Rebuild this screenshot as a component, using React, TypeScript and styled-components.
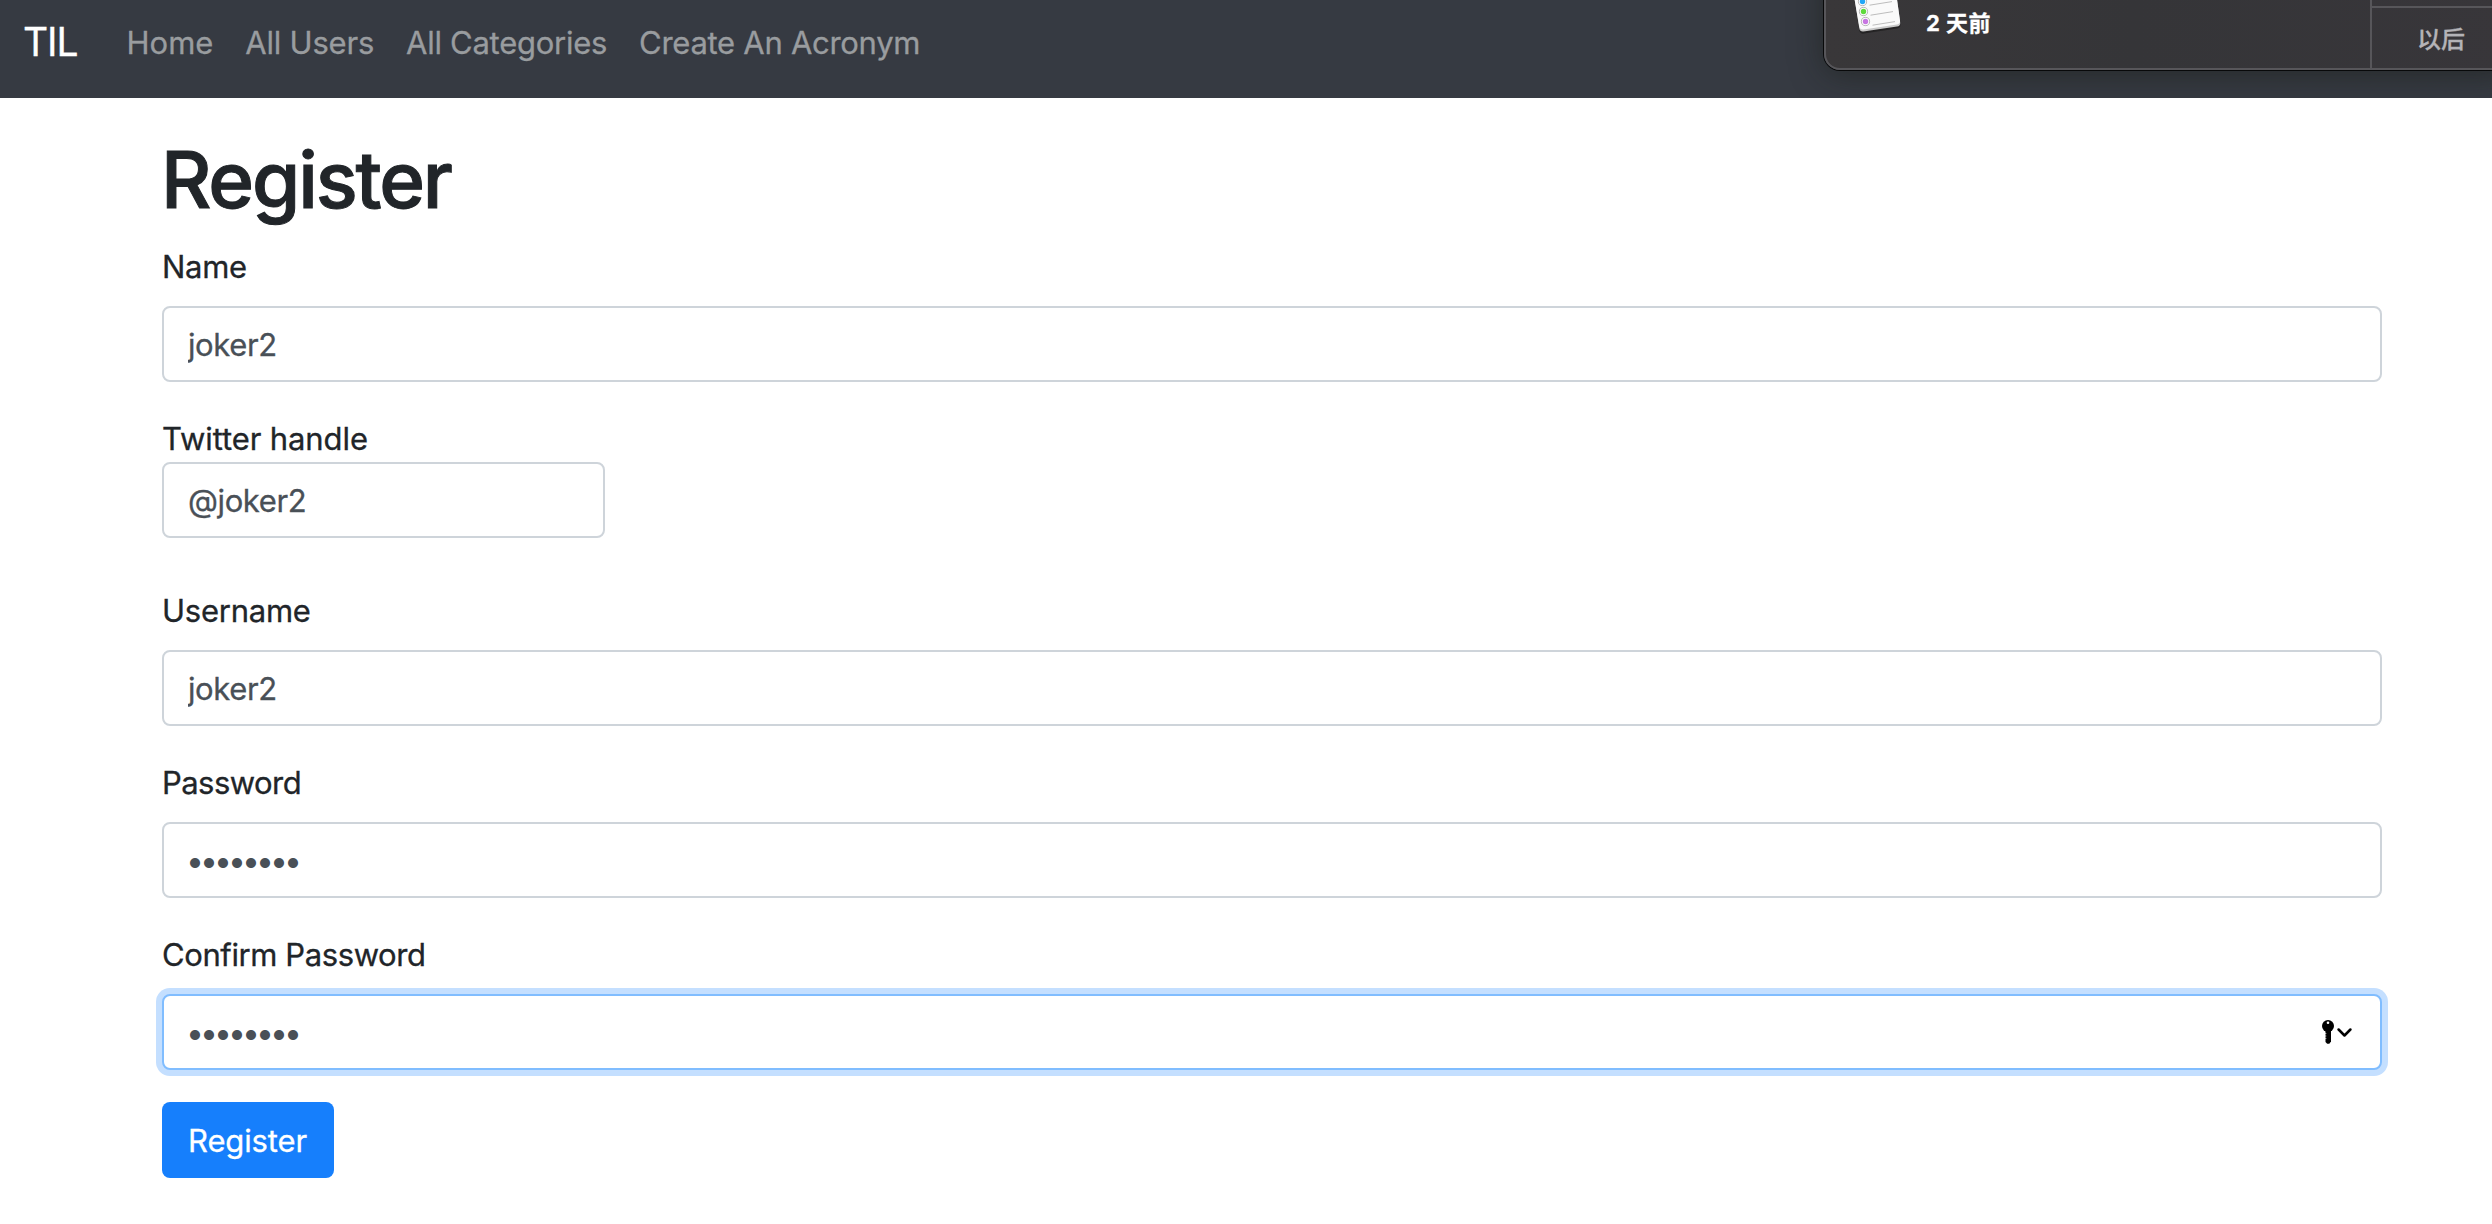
import React from 'react';
import styled, { createGlobalStyle, css } from 'styled-components';

const GlobalStyle = createGlobalStyle`
  * { box-sizing: border-box; }
  body {
    margin: 0;
    background: #fff;
    color: #212529;
    font-family: Inter, "Liberation Sans", "Noto Sans CJK SC", sans-serif;
    font-size: 31px;
    -webkit-text-stroke: 0.3px currentColor;
  }
`;

const Navbar = styled.nav`
  position: relative;
  display: flex;
  align-items: flex-start;
  height: 98px;
  padding: 12px 23px 0;
  overflow: hidden;
  background: #363a42;
`;

const Brand = styled.a`
  margin-right: 49px;
  color: #fff;
  font-size: 39px;
  line-height: 60px;
  letter-spacing: -1.07px;
`;

const NavLinks = styled.div`
  display: flex;
  gap: 32px;
  padding-top: 6px;
`;

const NavLink = styled.a<{ $tracking?: number }>`
  color: #999c9f;
  line-height: 50px;
  letter-spacing: ${(p) => p.$tracking ?? 0}px;
  white-space: nowrap;
`;

const Notification = styled.aside`
  position: absolute;
  top: -40px;
  right: -20px;
  display: flex;
  width: 688px;
  height: 110px;
  border: 2px solid #57565a;
  border-radius: 16px;
  background: linear-gradient(90deg, #393739, #353538 45%, #38363a);
  box-shadow: 0 0 0 1px #08090a, 0 4px 32px rgba(20, 24, 16, 0.5);
`;

const NotificationBody = styled.div`
  display: flex;
  flex: 1;
  padding: 38px 0 0 25px;
`;

const NotificationTime = styled.span`
  margin: 7px 0 0 23px;
  color: #fff;
  font-family: Inter, "Noto Sans CJK SC", sans-serif;
  font-size: 22px;
  font-weight: 700;
  line-height: 32px;
  letter-spacing: 0.5px;
`;

const NotificationActions = styled.div`
  display: flex;
  flex-direction: column;
  width: 140px;
  border-left: 2px solid #57565a;
`;

const NotificationAction = styled.div`
  height: 62px;
  margin-top: auto;
  padding: 12px 0 0 45px;
  border-top: 2px solid #57565a;
  color: #b4b3b7;
  font-family: "Noto Sans CJK SC", sans-serif;
  font-size: 24px;
  font-weight: 500;
  line-height: 36px;
`;

const Content = styled.main`
  padding: 32px 110px 0 162px;
`;

const Title = styled.h1`
  height: 96px;
  margin: 0 0 16px -1px;
  font-size: 78px;
  font-weight: 500;
  line-height: 99px;
  letter-spacing: -2.15px;
  -webkit-text-stroke-width: 1px;
`;

const Form = styled.form`
  display: flex;
  flex-direction: column;
  align-items: flex-start;
  gap: 32px;
`;

const Group = styled.div<{ $inline?: boolean }>`
  display: flex;
  flex-direction: column;
  width: ${(p) => (p.$inline ? '443px' : '100%')};
  gap: ${(p) => (p.$inline ? 0 : 16)}px;
  padding-bottom: ${(p) => (p.$inline ? 16 : 0)}px;
`;

const Label = styled.label<{ $tracking: number }>`
  height: 48px;
  line-height: 50px;
  letter-spacing: ${(p) => p.$tracking}px;
`;

const Control = styled.div<{ $active?: boolean }>`
  display: flex;
  align-items: center;
  height: 76px;
  padding-right: 28px;
  border: 2px solid #ced4da;
  border-radius: 8px;
  background: #fff;
  ${(p) =>
    p.$active &&
    css`
      border-color: #80bdff;
      box-shadow: 0 0 0 6px #c4dfff;
    `}
`;

const Input = styled.input`
  flex: 1;
  min-width: 0;
  height: 72px;
  padding: 0 0 0 24px;
  border: 0;
  outline: 0;
  background: transparent;
  color: #495057;
  font: inherit;
  letter-spacing: -0.4px;

  &[type='password'] {
    padding-left: 22px;
    font-size: 32px;
    letter-spacing: -4px;
    -webkit-text-stroke-width: 0;
  }
`;

const Submit = styled.button`
  width: 172px;
  height: 76px;
  padding: 0 1px 0 0;
  border: 0;
  border-radius: 8px;
  background: #167ffc;
  color: #fff;
  font: inherit;
  letter-spacing: -0.15px;
`;

const RemindersIcon = () => (
  <svg width="52" height="40" viewBox="1851 0 52 40">
    <path
      d="M1854 -4 L1859.3 29 Q1860 33 1864 32.4 L1897 27.4 Q1901 26.6 1900.4 22.6 L1896.500 -4 Z"
      fill="#141414"
      opacity="0.55"
      transform="translate(0 1.2)"
    />
    <path
      d="M1854 -4 L1859.3 28.500 Q1860 32 1863.500 31.500 L1897 26.500 Q1900.700 25.800 1900.200 22.400 L1896.500 -4 Z"
      fill="#c9c9c9"
    />
    <path
      d="M1854 -4 L1859.3 26.500 Q1860 30 1863.500 29.500 L1897 24.500 Q1900.500 23.800 1900 20.500 L1896.500 -4 Z"
      fill="#fafafa"
    />
    {[
      { x: 1862.5, y: 1.5, color: '#22a7f7' },
      { x: 1863.5, y: 11.5, color: '#5fda3c' },
      { x: 1865.5, y: 21.5, color: '#c877e2' },
    ].map(({ x, y, color }) => (
      <g key={color}>
        <circle cx={x} cy={y} r="4.1" fill="#fff" stroke="#a5a5a5" strokeWidth="0.8" />
        <circle cx={x} cy={y} r="2.7" fill={color} />
        <path d={`M${x + 7} ${y + 3.7} l22.500 -3.600`} stroke="#b5b5b5" strokeWidth="0.9" />
      </g>
    ))}
  </svg>
);

const KeyMenuIcon = () => (
  <svg width="32" height="28" viewBox="0 0 32 28" fill="none">
    <circle cx="8" cy="8" r="6" fill="#000" />
    <path d="M5.500 12 H11 V23.500 L9.300 25.700 H7.200 L5.500 24 Z" fill="#000" />
    <path d="M5.300 15.500 h1 M5.300 18 h1 M5.300 20.500 h1" stroke="#fff" strokeWidth="0.8" />
    <circle cx="8" cy="4.800" r="1.300" fill="#fff" />
    <path
      d="M18.600 11.500 L24.500 17.500 L30.400 11.500"
      stroke="#000"
      strokeWidth="2.5"
      strokeLinecap="round"
      strokeLinejoin="round"
    />
  </svg>
);

interface FieldProps {
  id: string;
  label: string;
  value: string;
  tracking: number;
  type?: string;
  inline?: boolean;
  active?: boolean;
}

const Field = ({ id, label, value, tracking, type = 'text', inline, active }: FieldProps) => (
  <Group $inline={inline}>
    <Label htmlFor={id} $tracking={tracking}>
      {label}
    </Label>
    <Control $active={active}>
      <Input id={id} type={type} defaultValue={value} spellCheck={false} />
      {active && <KeyMenuIcon />}
    </Control>
  </Group>
);

export default function App() {
  return (
    <>
      <GlobalStyle />
      <Navbar>
        <Brand>TIL</Brand>
        <NavLinks>
          <NavLink>Home</NavLink>
          <NavLink $tracking={-0.22}>All Users</NavLink>
          <NavLink $tracking={-0.27}>All Categories</NavLink>
          <NavLink $tracking={-0.28}>Create An Acronym</NavLink>
        </NavLinks>
        <Notification>
          <NotificationBody>
            <RemindersIcon />
            <NotificationTime>2 天前</NotificationTime>
          </NotificationBody>
          <NotificationActions>
            <NotificationAction>以后</NotificationAction>
          </NotificationActions>
        </Notification>
      </Navbar>
      <Content>
        <Title>Register</Title>
        <Form onSubmit={(e) => e.preventDefault()}>
          <Field id="name" label="Name" value="joker2" tracking={-0.3} />
          <Field id="twitter" label="Twitter handle" value="@joker2" tracking={-0.1} inline />
          <Field id="username" label="Username" value="joker2" tracking={-0.25} />
          <Field id="password" label="Password" value="password" tracking={-0.55} type="password" />
          <Field
            id="confirm"
            label="Confirm Password"
            value="password"
            tracking={-0.4}
            type="password"
            active
          />
          <Submit type="submit">Register</Submit>
        </Form>
      </Content>
    </>
  );
}
